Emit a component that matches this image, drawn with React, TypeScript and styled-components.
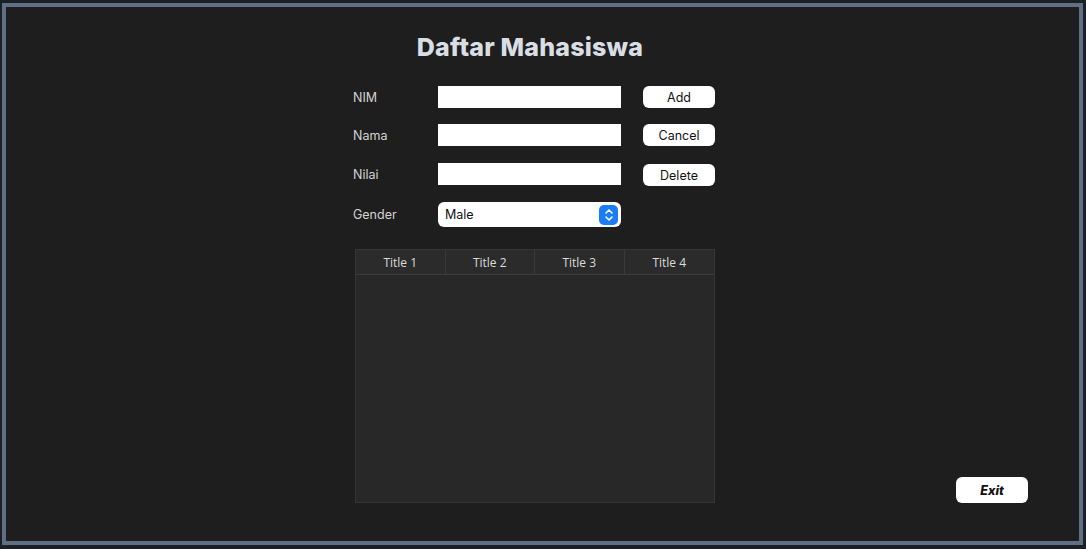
import React from "react";
import styled, { createGlobalStyle } from "styled-components";

const Global = createGlobalStyle`
  html, body { margin: 0; padding: 0; background: #1b2027; }
  body { font-family: "Poppins", "Inter", "Noto Sans", sans-serif; }
  * { box-sizing: border-box; }
`;

const Frame = styled.div`
  margin: 3px 3px 4px 2px;
  height: 542px;
  border: 4px solid #5f7085;
  background: #1e1e1e;
  display: flex;
  flex-direction: column;
  padding: 25px 0 0 347px;
`;

const Main = styled.div`
  display: flex;
  align-items: flex-end;
  gap: 241px;
`;

const Column = styled.div`
  width: 362px;
  display: flex;
  flex-direction: column;
`;

const Title = styled.h1`
  margin: 0 0 0 -8px;
  text-align: center;
  font-family: "Inter", "Noto Sans", sans-serif;
  font-weight: 800;
  font-size: 25px;
  line-height: 30px;
  color: #d9dee4;
  letter-spacing: 0.2px;
`;

const Form = styled.div`
  margin-top: 24px;
  display: grid;
  grid-template-columns: 63px 183px 72px;
  column-gap: 22px;
  row-gap: 16px;
  align-items: center;
`;

const Label = styled.span`
  font-family: "Inter", "Noto Sans", sans-serif;
  font-size: 12.5px;
  color: #d4d4d4;
`;

const Field = styled.input`
  height: 22px;
  border: none;
  background: #ffffff;
  outline: none;
  margin: 0;
  padding: 0 6px;
`;

const Button = styled.button<{ $shift?: number }>`
  height: 22px;
  border: none;
  border-radius: 6px;
  background: #ffffff;
  color: #111;
  font-family: "Inter", "Noto Sans", sans-serif;
  font-size: 12.5px;
  padding: 0;
  margin-top: ${(p) => (p.$shift ?? 0) * 2}px;
`;

const Select = styled.div`
  height: 25px;
  background: #ffffff;
  border-radius: 6px;
  display: flex;
  align-items: center;
  justify-content: space-between;
  padding: 0 3px 0 7px;
  font-family: "Inter", "Noto Sans", sans-serif;
  font-size: 12.5px;
  color: #111;
`;

const Spinner = styled.div`
  width: 19px;
  height: 20px;
  border-radius: 5px;
  background: #1a7df7;
  display: flex;
  align-items: center;
  justify-content: center;
`;

const Table = styled.div`
  margin: 22px 0 0 2px;
  width: 360px;
  height: 254px;
  background: #282828;
  border: 1px solid #363636;
  display: flex;
  flex-direction: column;
`;

const HeaderRow = styled.div`
  display: grid;
  grid-template-columns: repeat(4, 1fr);
  height: 25px;
  background: #2b2b2b;
  border-bottom: 1px solid #3c3c3c;
`;

const HeaderCell = styled.div`
  display: flex;
  align-items: center;
  justify-content: center;
  font-family: "Open Sans", "Noto Sans", sans-serif;
  font-size: 12px;
  color: #dcdcdc;
  border-right: 1px solid #3a3a3a;
  &:last-child { border-right: none; }
`;

const ExitButton = styled.button`
  width: 72px;
  height: 26px;
  border: none;
  border-radius: 6px;
  background: #ffffff;
  font-family: "Inter", "Noto Sans", sans-serif;
  font-weight: 800;
  font-style: italic;
  font-size: 12.5px;
  color: #111;
  padding: 0;
`;

export default function App() {
  return (
    <>
      <Global />
      <Frame>
        <Main>
          <Column>
            <Title>Daftar Mahasiswa</Title>
            <Form>
              <Label>NIM</Label>
              <Field />
              <Button>Add</Button>
              <Label>Nama</Label>
              <Field />
              <Button>Cancel</Button>
              <Label>Nilai</Label>
              <Field />
              <Button $shift={1}>Delete</Button>
              <Label>Gender</Label>
              <Select>
                <span>Male</span>
                <Spinner>
                  <svg width="10" height="14" viewBox="0 0 10 14" fill="none" stroke="#fff" strokeWidth="1.6" strokeLinecap="round" strokeLinejoin="round">
                    <path d="M2 5 L5 2 L8 5" />
                    <path d="M2 9 L5 12 L8 9" />
                  </svg>
                </Spinner>
              </Select>
              <span />
            </Form>
            <Table>
              <HeaderRow>
                <HeaderCell>Title 1</HeaderCell>
                <HeaderCell>Title 2</HeaderCell>
                <HeaderCell>Title 3</HeaderCell>
                <HeaderCell>Title 4</HeaderCell>
              </HeaderRow>
            </Table>
          </Column>
          <ExitButton>Exit</ExitButton>
        </Main>
      </Frame>
    </>
  );
}
